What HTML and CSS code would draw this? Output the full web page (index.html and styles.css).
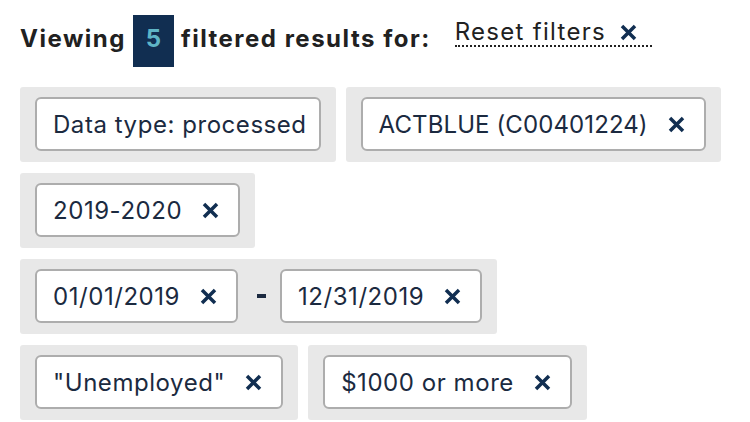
FILE: index.html
```html
<!DOCTYPE html>
<html lang="en">
<head>
<meta charset="utf-8">
<title>Filtered results</title>
<link rel="stylesheet" href="styles.css">
</head>
<body>
<div class="page">
  <div class="header">
    <h2 class="heading"><span class="word">Viewing</span><span class="count">5</span><span class="word">filtered results for:</span></h2>
    <button class="reset" type="button">Reset filters<svg class="x-icon x-reset" viewBox="0 0 17 17" aria-hidden="true"><path d="M2 2 L15 15 M15 2 L2 15"/></svg></button>
  </div>
  <ul class="tags">
    <li class="group">
      <span class="tag tag-plain">Data type: processed</span>
    </li>
    <li class="group">
      <span class="tag tag-caps">ACTBLUE (C00401224)<button class="remove" type="button" aria-label="Remove"><svg class="x-icon" viewBox="0 0 17 17"><path d="M2 2 L15 15 M15 2 L2 15"/></svg></button></span>
    </li>
    <li class="group">
      <span class="tag">2019-2020<button class="remove" type="button" aria-label="Remove"><svg class="x-icon" viewBox="0 0 17 17"><path d="M2 2 L15 15 M15 2 L2 15"/></svg></button></span>
    </li>
    <li class="group">
      <span class="tag">01/01/2019<button class="remove" type="button" aria-label="Remove"><svg class="x-icon" viewBox="0 0 17 17"><path d="M2 2 L15 15 M15 2 L2 15"/></svg></button></span>
      <span class="dash"></span>
      <span class="tag">12/31/2019<button class="remove" type="button" aria-label="Remove"><svg class="x-icon" viewBox="0 0 17 17"><path d="M2 2 L15 15 M15 2 L2 15"/></svg></button></span>
    </li>
    <li class="group">
      <span class="tag">"Unemployed"<button class="remove" type="button" aria-label="Remove"><svg class="x-icon" viewBox="0 0 17 17"><path d="M2 2 L15 15 M15 2 L2 15"/></svg></button></span>
    </li>
    <li class="group">
      <span class="tag">$1000 or more<button class="remove" type="button" aria-label="Remove"><svg class="x-icon" viewBox="0 0 17 17"><path d="M2 2 L15 15 M15 2 L2 15"/></svg></button></span>
    </li>
  </ul>
</div>
</body>
</html>
```
FILE: styles.css
```css
* { box-sizing: border-box; }
html, body { margin: 0; padding: 0; background: #ffffff; }
body { font-family: Inter, "Noto Sans", sans-serif; color: #212121; }
.page { padding: 15px 20px 0 20px; width: 750px; }

.header { display: flex; align-items: flex-start; height: 72px; }
.heading {
  margin: 0; display: flex; align-items: flex-start;
  font-size: 24px; font-weight: 700; line-height: 47px; color: #212121;
  letter-spacing: 1.5px; white-space: nowrap;
}
.count {
  display: block; width: 41px; height: 52px; margin: 0 7px 0 7px;
  background: #112e51; color: #5fb5c6; text-align: center; letter-spacing: 0;
}
.reset {
  margin: 4px 0 0 24px; padding: 0 15px 0 0;
  background: none; border: 0; border-bottom: 2px dotted #212121;
  font: 400 24px/26px Inter, "Noto Sans", sans-serif; letter-spacing: 1.3px; color: #212121;
  display: flex; align-items: center; cursor: pointer;
}
.x-icon { width: 17px; height: 17px; display: block; }
.x-icon path { stroke: #112e51; stroke-width: 3.5; fill: none; }
.x-reset { margin-left: 14px; }

.tags {
  list-style: none; margin: 0; padding: 0;
  display: flex; flex-wrap: wrap; column-gap: 10px; row-gap: 11px;
}
.group {
  display: flex; align-items: center;
  background: #e8e8e8; border-radius: 3px; padding: 10px 15px 11px;
}
.tag {
  display: flex; align-items: center; height: 54px;
  padding: 0 19px 0 16px;
  background: #fff; border: 2px solid #adadad; border-radius: 6px;
  font-size: 24px; letter-spacing: 0.55px; color: #1b2a40; white-space: nowrap;
}
.tag-plain { padding-right: 12px; }
.tag-caps { letter-spacing: 0.1px; }
.remove {
  margin-left: 20px; padding: 0; border: 0; background: none; cursor: pointer;
}
.dash { display: block; width: 9px; height: 4px; margin: 0 14px 0 19px; background: #1b2a40; }
```
